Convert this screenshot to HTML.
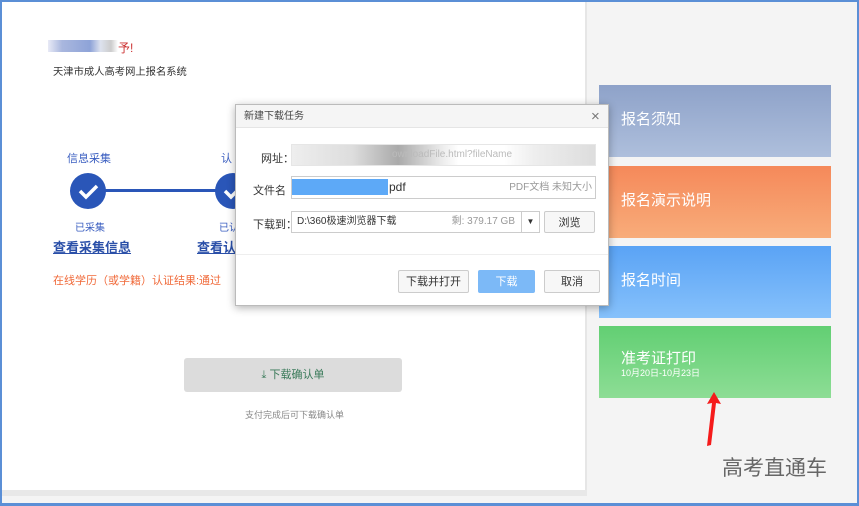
<!DOCTYPE html>
<html><head><meta charset="utf-8"><style>
*{margin:0;padding:0;box-sizing:border-box}
body{width:859px;height:506px;overflow:hidden;background:#f4f4f4;font-family:"Liberation Sans","Noto Sans CJK SC",sans-serif;position:relative}
.a{position:absolute}
.frame{left:0;top:0;width:859px;height:506px;border:2px solid #5b8fd6;border-bottom:3px solid #5b8fd6}
.card{left:599px;width:232px;height:72px;color:#fff;font-size:15px;overflow:hidden}
.card span{position:absolute;left:22px;top:23px}
.inp{border:1px solid #ccc;background:#fff;font-size:11px;color:#333}
.btn{border:1px solid #ccc;background:#f7f7f7;font-size:11px;text-align:center;line-height:22px;border-radius:2px;color:#333}
</style></head><body>
<div class="a" style="left:2px;top:2px;width:583px;height:488px;background:#fff"></div>
<div class="a" style="left:585px;top:2px;width:2px;height:488px;background:#e6e6e6"></div>
<div class="a" style="left:2px;top:490px;width:585px;height:6px;background:#e8e8e8"></div>

<div class="a" style="left:48px;top:40px;width:70px;height:12px;background:linear-gradient(90deg,#e8eaf6,#a9b7de 20%,#8ea3d8 60%,#dde2ee 75%,#ccc 90%,#fff)"></div>
<div class="a" style="left:118px;top:39px;font-size:12px;color:#c33">予!</div>
<div class="a" style="left:53px;top:63px;font-size:10.3px;color:#333">天津市成人高考网上报名系统</div>

<div class="a" style="left:67px;top:150px;font-size:11px;color:#3a5ec0">信息采集</div>
<div class="a" style="left:221px;top:150px;font-size:11px;color:#3a5ec0">认</div>
<div class="a" style="left:88px;top:189px;width:145px;height:3px;background:#2a56b8"></div>
<div class="a" style="left:70px;top:173px;width:36px;height:36px;border-radius:50%;background:#2a56b8"></div>
<div class="a" style="left:215px;top:173px;width:36px;height:36px;border-radius:50%;background:#2a56b8"></div>
<svg class="a" style="left:70px;top:173px" width="36" height="36"><path d="M10 18l6 6 11-11" stroke="#fff" stroke-width="3.5" fill="none"/></svg>
<svg class="a" style="left:215px;top:173px" width="36" height="36"><path d="M10 18l6 6 11-11" stroke="#fff" stroke-width="3.5" fill="none"/></svg>
<div class="a" style="left:75px;top:219px;font-size:10px;color:#3a5ec0">已采集</div>
<div class="a" style="left:219px;top:219px;font-size:10px;color:#3a5ec0">已认</div>
<div class="a" style="left:53px;top:237px;font-size:13px;color:#2a4fa8;text-decoration:underline;font-weight:bold">查看采集信息</div>
<div class="a" style="left:197px;top:237px;font-size:13px;color:#2a4fa8;text-decoration:underline;font-weight:bold">查看认</div>
<div class="a" style="left:53px;top:272px;font-size:11px;color:#f06a3a">在线学历（或学籍）认证结果:通过</div>

<div class="a" style="left:184px;top:358px;width:218px;height:34px;background:#dcdcdc;border-radius:3px;font-size:11px;color:#3a7a5a;text-align:center;line-height:34px">⤓ 下载确认单</div>
<div class="a" style="left:245px;top:408px;font-size:9px;color:#888">支付完成后可下载确认单</div>

<div class="a card" style="top:85px;background:linear-gradient(180deg,#8ea2c9,#aebfdc)"><span>报名须知</span></div>
<div class="a card" style="top:166px;background:linear-gradient(180deg,#f5895a,#f8ac7a)"><span>报名演示说明</span></div>
<div class="a card" style="top:246px;background:linear-gradient(180deg,#5aa3f5,#86c1fb)"><span>报名时间</span></div>
<div class="a card" style="top:326px;background:linear-gradient(180deg,#62cf73,#8ddd95)"><span style="top:21px">准考证打印</span><span style="top:40px;font-size:9px">10月20日-10月23日</span></div>
<svg class="a" style="left:700px;top:388px" width="25" height="62"><path d="M14 4l-7 12 5-1-5 43 4-1 5-42 5 1z" fill="#f51b1b"/></svg>
<div class="a" style="left:722px;top:452px;font-size:21px;color:#666">高考直通车</div>

<div class="a" style="left:235px;top:104px;width:374px;height:202px;background:#fff;border:1px solid #bbb;box-shadow:0 2px 8px rgba(0,0,0,.3)">
 <div class="a" style="left:0;top:0;width:372px;height:23px;background:#f5f5f5;border-bottom:1px solid #e5e5e5;font-size:10px;color:#444;line-height:23px;padding-left:8px">新建下载任务</div>
 <div class="a" style="left:355px;top:3px;font-size:15px;color:#777">×</div>
 <div class="a" style="left:25px;top:45px;font-size:11px;color:#333">网址：</div>
 <div class="a inp" style="left:55px;top:39px;width:305px;height:22px;border-color:#e6e6e6;background:linear-gradient(90deg,#eee,#ddd 20%,#aaa 35%,#eee 50%,#fff 55%,#fff 70%,#eee 80%,#ddd);color:#bbb;font-size:10px;line-height:20px;padding-left:100px">ownloadFile.html?fileName</div>
 <div class="a" style="left:17px;top:77px;font-size:11px;color:#333">文件名</div>
 <div class="a inp" style="left:55px;top:71px;width:305px;height:23px;line-height:21px"><div class="a" style="left:0;top:2px;width:96px;height:16px;background:#5da9f7"></div><span class="a" style="left:97px;top:0;font-size:12px">pdf</span><span class="a" style="right:3px;top:0;color:#999;font-size:10px">PDF文档 未知大小</span></div>
 <div class="a" style="left:17px;top:111px;font-size:11px;color:#333">下载到：</div>
 <div class="a inp" style="left:55px;top:106px;width:231px;height:22px;line-height:20px;padding-left:5px;font-size:10px">D:\360极速浏览器下载<span class="a" style="right:6px;top:0;color:#999">剩: 379.17 GB</span></div>
 <div class="a inp" style="left:285px;top:106px;width:19px;height:22px;text-align:center;line-height:20px;font-size:8px">▼</div>
 <div class="a btn" style="left:308px;top:106px;width:51px;height:22px">浏览</div>
 <div class="a" style="left:0;top:149px;width:372px;height:1px;background:#eee"></div>
 <div class="a btn" style="left:162px;top:165px;width:71px;height:23px">下载并打开</div>
 <div class="a btn" style="left:242px;top:165px;width:57px;height:23px;background:#7cb9f7;border-color:#7cb9f7;color:#fff">下载</div>
 <div class="a btn" style="left:308px;top:165px;width:56px;height:23px">取消</div>
</div>
<div class="a frame"></div>
</body></html>
